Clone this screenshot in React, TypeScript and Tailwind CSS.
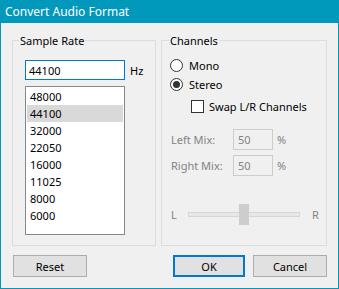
import React from "react";

const rates = ["48000", "44100", "32000", "22050", "16000", "11025", "8000", "6000"];

export default function App() {
  return (
    <div className="w-[339px] h-[289px] bg-[#f0f0f0] border border-t-0 border-[#0099bc] flex flex-col font-['Noto_Sans',sans-serif] text-[11px] text-black leading-[15px]">
      <div className="h-[23px] shrink-0 bg-[#0099bc] text-white text-[12px] pl-[4px] flex items-center">
        Convert Audio Format
      </div>
      <div className="flex flex-col px-[11px]">
        <div className="flex gap-[5px] mt-[10px]">
          <fieldset className="w-[144px] h-[213px] border border-[#dcdcdc] m-0 p-0">
            <legend className="ml-[6px] px-[1px] leading-[15px]">Sample Rate</legend>
            <div className="flex flex-col pl-[12px]">
              <div className="flex items-center mt-[12px]">
                <div className="w-[100px] h-[20px] border border-[#0078d7] bg-white flex items-center pl-[3px]">
                  44100
                </div>
                <span className="ml-[5px]">Hz</span>
              </div>
              <div className="mt-[6px] w-[100px] h-[149px] border border-[#828790] bg-white p-[1px] flex flex-col">
                {rates.map((r) => (
                  <div
                    key={r}
                    className={
                      r === "44100"
                        ? "h-[17px] shrink-0 pl-[3px] flex items-center bg-[#d9d9d9]"
                        : "h-[17px] shrink-0 pl-[3px] flex items-center"
                    }
                  >
                    {r}
                  </div>
                ))}
              </div>
            </div>
          </fieldset>
          <fieldset className="w-[166px] h-[213px] border border-[#dcdcdc] m-0 p-0">
            <legend className="ml-[7px] px-[1px] leading-[15px]">Channels</legend>
            <div className="flex flex-col pl-[8px]">
              <div className="flex items-center h-[19px] mt-[8px]">
                <div className="w-[13px] h-[13px] rounded-full border border-[#333333] bg-white" />
                <span className="ml-[6px]">Mono</span>
              </div>
              <div className="flex items-center h-[19px]">
                <div className="w-[13px] h-[13px] rounded-full border border-[#333333] bg-white flex items-center justify-center">
                  <div className="w-[7px] h-[7px] rounded-full bg-[#333333]" />
                </div>
                <span className="ml-[6px]">Stereo</span>
              </div>
              <div className="flex items-center h-[19px] mt-[3px] pl-[21px]">
                <div className="w-[13px] h-[13px] border border-[#333333] bg-white" />
                <span className="ml-[5px]">Swap L/R Channels</span>
              </div>
              <div className="flex items-center h-[21px] mt-[13px] text-[#838383]">
                <span className="w-[63px] pl-[1px]">Left Mix:</span>
                <div className="w-[40px] h-[21px] border border-[#cccccc] flex items-center pl-[4px]">50</div>
                <span className="ml-[4px]">%</span>
              </div>
              <div className="flex items-center h-[21px] mt-[5px] text-[#838383]">
                <span className="w-[63px] pl-[1px]">Right Mix:</span>
                <div className="w-[40px] h-[21px] border border-[#cccccc] flex items-center pl-[4px]">50</div>
                <span className="ml-[4px]">%</span>
              </div>
              <div className="flex items-center h-[21px] mt-[28px] text-[#838383]">
                <span className="w-[18px] pl-[1px]">L</span>
                <div className="relative w-[112px] h-[5px] border border-[#d6d6d6] bg-[#e7e7e7]">
                  <div className="absolute left-[50px] top-[-9px] w-[10px] h-[21px] bg-[#cdcdcd]" />
                </div>
                <span className="ml-[12px]">R</span>
              </div>
            </div>
          </fieldset>
        </div>
        <div className="flex mt-[9px] items-center">
          <button className="ml-[1px] w-[74px] h-[22px] bg-[#e1e1e1] border border-[#adadad] text-[11px]">
            Reset
          </button>
          <button className="ml-auto w-[72px] h-[22px] bg-[#e1e1e1] border-2 border-[#0078d7] text-[11px]">
            OK
          </button>
          <button className="ml-[8px] w-[74px] h-[22px] bg-[#e1e1e1] border border-[#adadad] text-[11px]">
            Cancel
          </button>
        </div>
      </div>
    </div>
  );
}
